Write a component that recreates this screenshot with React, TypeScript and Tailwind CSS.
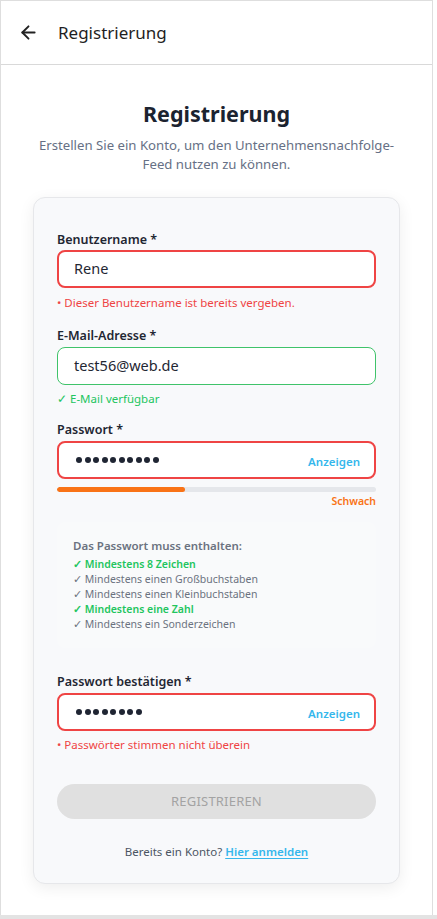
import React from "react";
import { ArrowLeft } from "lucide-react";

function Dots({ n }: { n: number }) {
  return (
    <div className="flex items-center gap-[2.5px]">
      {Array.from({ length: n }).map((_, i) => (
        <span key={i} className="block w-[6px] h-[6px] rounded-full bg-[#1f2533]" />
      ))}
    </div>
  );
}

export default function App() {
  return (
    <div
      className="w-[437px] h-[919px] bg-white flex flex-col overflow-hidden"
      style={{ fontFamily: '"Noto Sans", "Open Sans", sans-serif' }}
    >
      <div className="w-[433px] h-[915px] border-t border-r border-l border-[#dedede] flex flex-col">
        {/* Header */}
        <div className="h-[64px] shrink-0 border-b border-[#d9d9d9] flex items-center pl-[17px]">
          <ArrowLeft size={21} strokeWidth={2.2} className="text-[#222]" />
          <span className="ml-[19px] text-[17px] text-[#1f1f1f] leading-none">Registrierung</span>
        </div>

        {/* Body */}
        <div className="flex-1 flex flex-col items-center">
          <h1 className="mt-[34px] text-[21.5px] font-bold text-[#1b2330] leading-[30px]">Registrierung</h1>
          <p className="mt-[7px] text-[13.2px] leading-[18.5px] text-[#667085] text-center w-[370px]">
            Erstellen Sie ein Konto, um den Unternehmensnachfolge-Feed nutzen zu können.
          </p>

          {/* Card */}
          <div className="mt-[24px] w-[367px] h-[687px] bg-[#f8f9fb] border border-[#e6e7ea] rounded-[12px] shadow-[0_4px_16px_rgba(0,0,0,0.07)] px-[23px] pt-[33px]">
            {/* Username */}
            <label className="block text-[12.5px] font-semibold text-[#1f2733] leading-[18px]">Benutzername *</label>
            <div className="mt-[1px] h-[38px] bg-white border-2 border-[#ef4444] rounded-[8px] flex items-center px-[15px]">
              <span className="text-[14.5px] text-[#1f2733]">Rene</span>
            </div>
            <p className="mt-[7px] text-[11.5px] leading-[16px] text-[#ef4444]">• Dieser Benutzername ist bereits vergeben.</p>

            {/* Email */}
            <label className="mt-[16px] block text-[12.5px] font-semibold text-[#1f2733] leading-[18px]">E-Mail-Adresse *</label>
            <div className="mt-[2px] h-[38px] bg-white border border-[#3fc36a] rounded-[8px] flex items-center px-[16px]">
              <span className="text-[14.5px] text-[#1f2733]">test56@web.de</span>
            </div>
            <p className="mt-[6px] text-[11.5px] leading-[16px] text-[#22c55e]">✓ E-Mail verfügbar</p>

            {/* Password */}
            <label className="mt-[14px] block text-[12.5px] font-semibold text-[#1f2733] leading-[18px]">Passwort *</label>
            <div className="mt-[2px] h-[38px] bg-white border-2 border-[#ef4444] rounded-[8px] flex items-center justify-between pl-[17px] pr-[14px]">
              <Dots n={10} />
              <span className="text-[11.5px] font-semibold text-[#35b7ec] mt-[3px]">Anzeigen</span>
            </div>
            <div className="mt-[8px] h-[5px] rounded-full bg-[#e5e7eb] overflow-hidden">
              <div className="h-full w-[40%] bg-[#f97316] rounded-full" />
            </div>
            <div className="mt-[2px] text-right text-[10.5px] font-semibold text-[#f97316] leading-[14px]">Schwach</div>

            {/* Requirements */}
            <div className="mt-[14px] bg-[#f9fafb] rounded-[8px] px-[16px] pt-[16px] pb-[16px]">
              <p className="text-[11.5px] font-semibold text-[#6b7280] leading-[16px]">Das Passwort muss enthalten:</p>
              <ul className="mt-[3px] text-[10.5px] leading-[15px]">
                <li className="text-[#22c55e] font-semibold">✓ Mindestens 8 Zeichen</li>
                <li className="text-[#6b7280]">✓ Mindestens einen Großbuchstaben</li>
                <li className="text-[#6b7280]">✓ Mindestens einen Kleinbuchstaben</li>
                <li className="text-[#22c55e] font-semibold">✓ Mindestens eine Zahl</li>
                <li className="text-[#6b7280]">✓ Mindestens ein Sonderzeichen</li>
              </ul>
            </div>

            {/* Confirm */}
            <label className="mt-[25px] block text-[12.5px] font-semibold text-[#1f2733] leading-[18px]">Passwort bestätigen *</label>
            <div className="mt-[2px] h-[38px] bg-white border-2 border-[#ef4444] rounded-[8px] flex items-center justify-between pl-[17px] pr-[14px]">
              <Dots n={8} />
              <span className="text-[11.5px] font-semibold text-[#35b7ec] mt-[3px]">Anzeigen</span>
            </div>
            <p className="mt-[6px] text-[11.5px] leading-[16px] text-[#ef4444]">• Passwörter stimmen nicht überein</p>

            {/* Button */}
            <div className="mt-[31px] h-[35px] rounded-full bg-[#e0e0e0] flex items-center justify-center">
              <span className="text-[13px] text-[#a3a3a3] tracking-[0.2px]">REGISTRIEREN</span>
            </div>

            <p className="mt-[24px] text-center text-[11.5px] text-[#4b5563]">
              Bereits ein Konto?{" "}
              <span className="text-[#35b7ec] font-semibold underline underline-offset-2">Hier anmelden</span>
            </p>
          </div>
        </div>
      </div>
      <div className="flex-1 bg-[#e3e3e3]" />
    </div>
  );
}
